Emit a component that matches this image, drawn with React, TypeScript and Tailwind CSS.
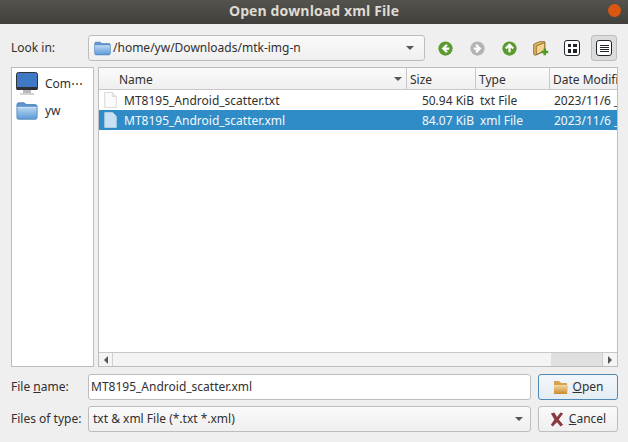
import React from 'react';

const FolderIcon = ({ className }: { className: string }) => (
  <svg viewBox="0 0 24 20" className={className}>
    <defs>
      <linearGradient id="folderBody" x1="0" y1="0" x2="0" y2="1">
        <stop offset="0" stopColor="#b5d6f2" />
        <stop offset="1" stopColor="#5f9bd8" />
      </linearGradient>
    </defs>
    <path d="M1 3 Q1 1 3 1 H9 L11 3 H21 Q23 3 23 5 V17 Q23 19 21 19 H3 Q1 19 1 17 Z" fill="#5d94cf" stroke="#3c74ad" strokeWidth="0.8" />
    <path d="M1.5 6 H22.5 V17 Q22.5 18.5 21 18.5 H3 Q1.5 18.5 1.5 17 Z" fill="url(#folderBody)" />
    <path d="M1.5 6 H22.5" stroke="#eaf4fc" strokeWidth="0.8" />
  </svg>
);

const PaperIcon = ({ selected }: { selected?: boolean }) => (
  <svg viewBox="0 0 16 18" className="w-[15px] h-[16px] shrink-0">
    <path d="M1.5 .5 H10 L14.5 5 V17.5 H1.5 Z" fill={selected ? '#c9e1f1' : '#fbfbfb'} stroke={selected ? '#b6d5ea' : '#d4d4d4'} />
    <path d="M10 .5 V5 H14.5" fill={selected ? '#e3f0f8' : '#eeeeee'} stroke={selected ? '#b6d5ea' : '#d4d4d4'} />
  </svg>
);

const NavIcon = ({ dir, color }: { dir: 'left' | 'right' | 'up'; color: string }) => {
  const d = {
    left: 'M12 5 L7 10 L12 15 M7.5 10 H15',
    right: 'M8 5 L13 10 L8 15 M12.5 10 H5',
    up: 'M5 10 L10 5 L15 10 M10 5.5 V15',
  }[dir];
  return (
    <svg viewBox="0 0 20 20" className="w-[15px] h-[15px]">
      <circle cx="10" cy="10" r="9.5" fill={color} />
      <path d={d} stroke="#fff" strokeWidth="3" fill="none" />
    </svg>
  );
};

const Caret = () => (
  <div className="w-0 h-0 border-l-[4px] border-r-[4px] border-t-[4px] border-l-transparent border-r-transparent border-t-[#555]" />
);

const Header = ({ label, className }: { label: string; className: string }) => (
  <div className={`h-full flex items-center pt-[2px] border-r border-[#c8c8c8] ${className}`}>{label}</div>
);

const Row = ({ name, size, type, selected }: { name: string; size: string; type: string; selected?: boolean }) => (
  <div className={`flex h-[20px] items-center ${selected ? 'bg-[#308cc6] text-[#f4f9fc]' : 'text-[#303030]'}`}>
    <div className="w-[308px] flex items-center pl-[4px] gap-[6px] shrink-0">
      <PaperIcon selected={selected} />
      <span className="pt-[2px]">{name}</span>
    </div>
    <div className="w-[67px] text-right pt-[2px] shrink-0">{size}</div>
    <div className="w-[76px] pl-[6px] pt-[2px] shrink-0">{type}</div>
    <div className="flex-1 pl-[4px] pt-[2px] whitespace-nowrap overflow-hidden">2023/11/6 _</div>
  </div>
);

export default function App() {
  return (
    <div className="w-[628px] h-[442px] flex flex-col bg-[#efefef] overflow-hidden text-[12px] text-[#303030] font-['Noto_Sans',sans-serif]">
      {/* Title bar */}
      <div className="relative h-[24px] shrink-0 flex items-center justify-center pb-[3px] bg-gradient-to-b from-[#55534e] to-[#413f3b] text-[#dfdbd2] text-[14px] tracking-[0.1px] font-bold font-['Open_Sans',sans-serif]">
        Open download xml File
        <div className="absolute right-[7px] top-[4px] w-[13px] h-[13px] rounded-full bg-[#d9570f]" />
      </div>

      <div className="flex-1 flex flex-col pl-[11px] pr-[10px] pt-[11px]">
        {/* Look in */}
        <div className="flex items-center h-[26px]">
          <div className="w-[77px] shrink-0">Look in:</div>
          <div className="w-[337px] h-full flex items-center pl-[5px] pr-[10px] border border-[#bdbdbd] rounded-[3px] bg-gradient-to-b from-[#fafafa] to-[#efefef] shrink-0">
            <FolderIcon className="w-[17px] h-[15px] shrink-0" />
            <span className="ml-[2px] flex-1">/home/yw/Downloads/mtk-img-n</span>
            <Caret />
          </div>
          <div className="ml-[12px] w-[16px] flex justify-center"><NavIcon dir="left" color="#5a9a2f" /></div>
          <div className="ml-[16px] w-[16px] flex justify-center"><NavIcon dir="right" color="#b3b3b3" /></div>
          <div className="ml-[16px] w-[16px] flex justify-center"><NavIcon dir="up" color="#5a9a2f" /></div>
          <svg viewBox="0 0 20 20" className="ml-[15px] w-[17px] h-[17px]">
            <path d="M2 5 L9 2 L15 2 V13 L4 18 L2 17 Z" fill="#e2b862" stroke="#84652a" />
            <path d="M5 7 L15 3 V13 L5 17 Z" fill="#f3d48a" stroke="#84652a" />
            <path d="M15 10 V18 M11 14 H19" stroke="#4c9a2a" strokeWidth="3" />
          </svg>
          <div className="ml-[15px] w-[16px] h-[16px] rounded-[3px] border-[1.5px] border-[#20242c] bg-white grid grid-cols-2 gap-[2px] p-[2.5px]">
            <div className="bg-[#20242c]" /><div className="bg-[#20242c]" /><div className="bg-[#20242c]" /><div className="bg-[#20242c]" />
          </div>
          <div className="ml-[11px] w-[26px] h-[26px] flex items-center justify-center rounded-[3px] bg-[#dcdcdc] border border-[#bcbcbc]">
            <div className="w-[16px] h-[16px] rounded-[3px] border-[1.5px] border-[#20242c] bg-white flex flex-col justify-center gap-[1px] px-[2.5px]">
              <div className="h-[1px] bg-[#20242c]" /><div className="h-[1px] bg-[#20242c]" /><div className="h-[1px] bg-[#20242c]" /><div className="h-[1px] bg-[#20242c]" />
            </div>
          </div>
        </div>

        {/* Panels */}
        <div className="flex mt-[6px] h-[300px] gap-[4px]">
          <div className="w-[83px] shrink-0 bg-white border border-[#bdbdbd] pt-[2px]">
            <div className="flex items-center h-[27px] pl-[4px] gap-[7px]">
              <svg viewBox="0 0 22 24" className="w-[22px] h-[24px] shrink-0">
                <rect x="0.5" y="0.5" width="21" height="17" rx="2" fill="#3f78c4" stroke="#30343a" />
                <rect x="0.5" y="15" width="21" height="3" fill="#2c2f36" />
                <rect x="7" y="18" width="8" height="3" fill="#b9b9b9" />
                <rect x="4" y="21" width="14" height="2" fill="#d2d2d2" />
              </svg>
              <span>Com⋯</span>
            </div>
            <div className="flex items-center h-[27px] pl-[4px] gap-[7px]">
              <FolderIcon className="w-[22px] h-[20px] shrink-0" />
              <span>yw</span>
            </div>
          </div>

          <div className="flex-1 flex flex-col bg-white border border-[#bdbdbd] min-w-0">
            <div className="h-[22px] shrink-0 flex bg-gradient-to-b from-[#fbfbfb] to-[#efefef] border-b border-[#c8c8c8]">
              <div className="w-[308px] shrink-0 h-full flex items-center justify-between pl-[20px] pr-[4px] border-r border-[#c8c8c8]">
                <span className="pt-[2px]">Name</span>
                <Caret />
              </div>
              <Header label="Size" className="w-[69px] pl-[3px] shrink-0" />
              <Header label="Type" className="w-[74px] pl-[3px] shrink-0" />
              <div className="flex-1 h-full flex items-center pt-[2px] pl-[3px] whitespace-nowrap overflow-hidden">Date Modifi</div>
            </div>
            <Row name="MT8195_Android_scatter.txt" size="50.94 KiB" type="txt File" />
            <Row name="MT8195_Android_scatter.xml" size="84.07 KiB" type="xml File" selected />
            <div className="flex-1" />
            <div className="h-[14px] shrink-0 flex items-stretch bg-[#f4f4f4] border-t border-[#c8c8c8]">
              <div className="w-[14px] flex items-center justify-center border-r border-[#cfcfcf]">
                <div className="w-0 h-0 border-t-[4px] border-b-[4px] border-r-[4px] border-t-transparent border-b-transparent border-r-[#555]" />
              </div>
              <div className="flex-1" />
              <div className="w-[51px] bg-[#e0e0e0]" />
              <div className="w-[15px] flex items-center justify-center border-l border-[#cfcfcf]">
                <div className="w-0 h-0 border-t-[4px] border-b-[4px] border-l-[4px] border-t-transparent border-b-transparent border-l-[#555]" />
              </div>
            </div>
          </div>
        </div>

        {/* File name */}
        <div className="flex items-center h-[26px] mt-[7px]">
          <div className="w-[77px] shrink-0">File <span className="underline">n</span>ame:</div>
          <div className="w-[443px] h-full flex items-center pl-[2px] bg-white border border-[#bdbdbd] rounded-[3px] shrink-0">MT8195_Android_scatter.xml</div>
          <div className="ml-[7px] flex-1 h-full flex items-center justify-center gap-[4px] rounded-[3px] border border-[#4f89b5] bg-gradient-to-b from-[#f2f7fb] to-[#e4edf3]">
            <svg viewBox="0 0 16 16" className="w-[16px] h-[16px]">
              <defs>
                <linearGradient id="openFolder" x1="0" y1="0" x2="0" y2="1">
                  <stop offset="0" stopColor="#f4d9a4" />
                  <stop offset="1" stopColor="#c98a2e" />
                </linearGradient>
              </defs>
              <path d="M1 2 H6 L8 4 H14 V14 H1 Z" fill="#d8a24c" />
              <path d="M1 6 H15 L14 15 H1 Z" fill="url(#openFolder)" />
            </svg>
            <span><span className="underline">O</span>pen</span>
          </div>
        </div>

        {/* Files of type */}
        <div className="flex items-center h-[26px] mt-[6px]">
          <div className="w-[77px] shrink-0">Files of type:</div>
          <div className="w-[443px] h-full flex items-center pl-[4px] pr-[7px] justify-between border border-[#bdbdbd] rounded-[3px] bg-gradient-to-b from-[#fafafa] to-[#efefef] shrink-0">
            <span>txt &amp; xml File (*.txt *.xml)</span>
            <Caret />
          </div>
          <div className="ml-[7px] flex-1 h-full flex items-center justify-center gap-[5px] rounded-[3px] border border-[#bdbdbd] bg-gradient-to-b from-[#fafafa] to-[#efefef]">
            <svg viewBox="0 0 16 16" className="w-[14px] h-[15px]">
              <path d="M1 1 L5 0 L8 5 L12 0 L15 1 L10 8 L15 14 L12 16 L8 11 L3 16 L1 14 L5 8 Z" fill="#8c3a42" />
            </svg>
            <span><span className="underline">C</span>ancel</span>
          </div>
        </div>
      </div>
    </div>
  );
}
